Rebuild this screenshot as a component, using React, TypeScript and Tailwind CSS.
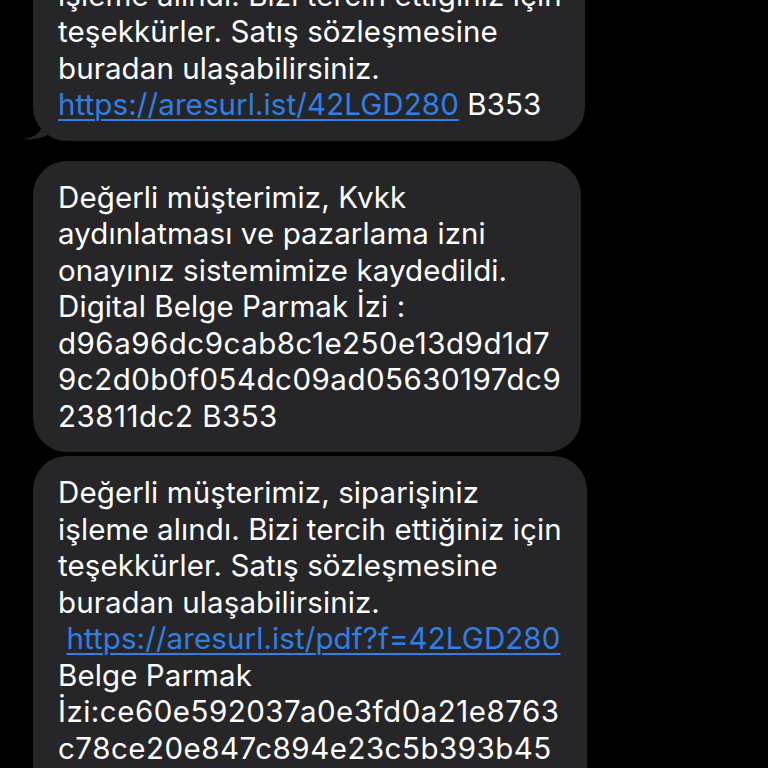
import React from 'react';

const link = 'text-[#2f80e6] underline decoration-[2px] underline-offset-[4px]';
const hash = 'tracking-[0.5px]';

type Line = { text: React.ReactNode; cls?: string };

function Bubble({ lines, width, tail, className = '' }: {
  lines: Line[];
  width: string;
  tail?: boolean;
  className?: string;
}) {
  return (
    <div className={`relative ${width} rounded-[34px] bg-[#262628] pl-[25px] pr-4 py-[18px] ${className}`}>
      {tail && (
        <svg className="absolute left-[-10px] bottom-0" width="40" height="32" viewBox="0 0 40 32">
          <path d="M20 0 L20 10 C20 22 14 28 0 30 C12 31 22 29 30 22 L40 22 L40 0 Z" fill="#262628" />
        </svg>
      )}
      {lines.map((l, i) => (
        <div key={i} className={`relative whitespace-pre ${l.cls ?? ''}`}>{l.text}</div>
      ))}
    </div>
  );
}

export default function App() {
  return (
    <div className="h-[768px] w-[768px] overflow-hidden bg-black text-white text-[29.5px] leading-[36.5px] tracking-[0.1px] font-['Inter','Noto_Sans',sans-serif]">
      <div className="flex flex-col pl-[33px] mt-[-78px]">
        <Bubble
          width="w-[552px]"
          tail
          lines={[
            { text: 'Değerli müşterimiz, siparişiniz' },
            { text: 'işleme alındı. Bizi tercih ettiğiniz için' },
            { text: 'teşekkürler. Satış sözleşmesine' },
            { text: 'buradan ulaşabilirsiniz.' },
            {
              text: (
                <>
                  <span className={link}>https://aresurl.ist/42LGD280</span> B353
                </>
              ),
            },
          ]}
        />
        <Bubble
          width="w-[548px]"
          className="mt-[20px]"
          lines={[
            { text: 'Değerli müşterimiz, Kvkk' },
            { text: 'aydınlatması ve pazarlama izni' },
            { text: 'onayınız sistemimize kaydedildi.' },
            { text: 'Digital Belge Parmak İzi :' },
            { text: 'd96a96dc9cab8c1e250e13d9d1d7', cls: hash },
            { text: '9c2d0b0f054dc09ad05630197dc9', cls: hash },
            { text: '23811dc2 B353', cls: hash },
          ]}
        />
        <Bubble
          width="w-[554px]"
          className="mt-[4px]"
          lines={[
            { text: 'Değerli müşterimiz, siparişiniz' },
            { text: 'işleme alındı. Bizi tercih ettiğiniz için' },
            { text: 'teşekkürler. Satış sözleşmesine' },
            { text: 'buradan ulaşabilirsiniz.' },
            {
              text: (
                <>
                  {' '}
                  <span className={link}>https://aresurl.ist/pdf?f=42LGD280</span>
                </>
              ),
            },
            { text: 'Belge Parmak' },
            { text: 'İzi:ce60e592037a0e3fd0a21e8763', cls: hash },
            { text: 'c78ce20e847c894e23c5b393b45', cls: hash },
            { text: '7f0d3 B353', cls: hash },
          ]}
        />
      </div>
    </div>
  );
}
